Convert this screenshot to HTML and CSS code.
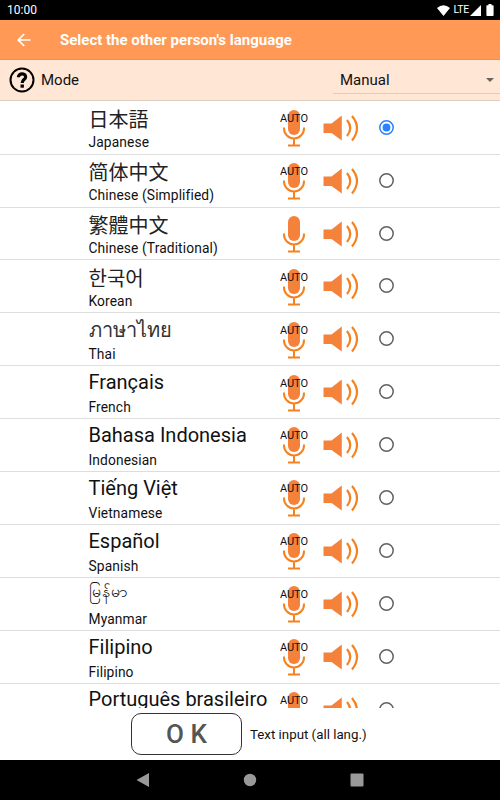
FILE: index.html
```html
<!DOCTYPE html>
<html lang="en">
<head>
<meta charset="utf-8">
<title>Select the other person's language</title>
<link rel="stylesheet" href="styles.css">
</head>
<body>
<svg class="defs" aria-hidden="true">
  <symbol id="mic" viewBox="0 0 30 40">
    <rect x="9" y="2" width="12" height="25" rx="6" fill="#f4823a"/>
    <path d="M5 19.500V20.500C5 26 9.500 30.500 15 30.500S25 26 25 20.500V19.500M15 30.500V37M9 37.500H21" fill="none" stroke="#f5821f" stroke-width="2"/>
  </symbol>
  <symbol id="speaker" viewBox="0 0 40 30">
    <path d="M2.500 10.500H10.500L20.800 2.500V27.500L10.500 20H2.500Z" fill="#f4823a"/>
    <path d="M26 7Q32.500 15 26 23M31 3Q41 15 31 27.500" fill="none" stroke="#f5821f" stroke-width="2.200"/>
  </symbol>
  <symbol id="radio" viewBox="0 0 15 15">
    <circle cx="7.500" cy="7.500" r="6.700" fill="none" stroke="currentColor" stroke-width="1.500"/>
  </symbol>
  <symbol id="radio-on" viewBox="0 0 15 15">
    <circle cx="7.500" cy="7.500" r="6.700" fill="none" stroke="currentColor" stroke-width="1.500"/>
    <circle cx="7.500" cy="7.500" r="3.900" fill="currentColor"/>
  </symbol>
</svg>
<div class="screen">
  <div class="status">
    <span class="time">10:00</span>
    <svg class="wifi" viewBox="0 0 13 11"><path d="M0 3Q6.500-2.500 13 3L6.500 11Z" fill="#fff"/></svg>
    <span class="lte">LTE</span>
    <svg class="signal" viewBox="0 0 11 11"><path d="M11 0V11H0Z" fill="#fff"/></svg>
    <svg class="battery" viewBox="0 0 8 12"><path d="M2.500 0H5.500V1.200H7Q7.600 1.200 7.600 2V11Q7.600 12 6.800 12H1.200Q.4 12 .4 11V2Q.4 1.200 1 1.200H2.500Z" fill="#fff"/></svg>
  </div>
  <header class="appbar">
    <svg class="back" viewBox="0 0 14 14"><path d="M13.500 7H1.500M7.200 1L1.200 7L7.200 13" fill="none" stroke="#fff" stroke-width="1.700"/></svg>
    <h1>Select the other person's language</h1>
  </header>
  <div class="mode">
    <svg class="help" viewBox="0 0 26 26"><circle cx="13" cy="13" r="11.500" fill="none" stroke="#000" stroke-width="2"/><path d="M9.400 10.200C9.400 5.600 16.600 5.800 16.600 9.900C16.600 12.700 13.200 12.500 13.200 16" fill="none" stroke="#000" stroke-width="3.200"/><rect x="11.500" y="17.500" width="3.400" height="3.200"/></svg>
    <span>Mode</span>
    <div class="select"><span>Manual</span><i class="caret"></i></div>
  </div>
  <main class="list">
    <div class="row"><div class="lang"><div class="name cjk" lang="ja">日本語</div><div class="sub">Japanese</div></div><div class="mic"><svg><use href="#mic"/></svg><b>AUTO</b></div><svg class="speaker"><use href="#speaker"/></svg><svg class="radio on"><use href="#radio-on"/></svg></div>
    <div class="row"><div class="lang"><div class="name cjk sc" lang="zh-Hans">简体中文</div><div class="sub">Chinese (Simplified)</div></div><div class="mic"><svg><use href="#mic"/></svg><b>AUTO</b></div><svg class="speaker"><use href="#speaker"/></svg><svg class="radio"><use href="#radio"/></svg></div>
    <div class="row"><div class="lang"><div class="name cjk tc" lang="zh-Hant">繁體中文</div><div class="sub">Chinese (Traditional)</div></div><div class="mic"><svg><use href="#mic"/></svg></div><svg class="speaker"><use href="#speaker"/></svg><svg class="radio"><use href="#radio"/></svg></div>
    <div class="row"><div class="lang"><div class="name cjk kr" lang="ko">한국어</div><div class="sub">Korean</div></div><div class="mic"><svg><use href="#mic"/></svg><b>AUTO</b></div><svg class="speaker"><use href="#speaker"/></svg><svg class="radio"><use href="#radio"/></svg></div>
    <div class="row"><div class="lang"><div class="name thai" lang="th">ภาษาไทย</div><div class="sub">Thai</div></div><div class="mic"><svg><use href="#mic"/></svg><b>AUTO</b></div><svg class="speaker"><use href="#speaker"/></svg><svg class="radio"><use href="#radio"/></svg></div>
    <div class="row"><div class="lang"><div class="name">Français</div><div class="sub">French</div></div><div class="mic"><svg><use href="#mic"/></svg><b>AUTO</b></div><svg class="speaker"><use href="#speaker"/></svg><svg class="radio"><use href="#radio"/></svg></div>
    <div class="row"><div class="lang"><div class="name">Bahasa Indonesia</div><div class="sub">Indonesian</div></div><div class="mic"><svg><use href="#mic"/></svg><b>AUTO</b></div><svg class="speaker"><use href="#speaker"/></svg><svg class="radio"><use href="#radio"/></svg></div>
    <div class="row"><div class="lang"><div class="name" lang="vi">Tiếng Việt</div><div class="sub">Vietnamese</div></div><div class="mic"><svg><use href="#mic"/></svg><b>AUTO</b></div><svg class="speaker"><use href="#speaker"/></svg><svg class="radio"><use href="#radio"/></svg></div>
    <div class="row"><div class="lang"><div class="name">Español</div><div class="sub">Spanish</div></div><div class="mic"><svg><use href="#mic"/></svg><b>AUTO</b></div><svg class="speaker"><use href="#speaker"/></svg><svg class="radio"><use href="#radio"/></svg></div>
    <div class="row"><div class="lang"><div class="name myanmar" lang="my">မြန်မာ</div><div class="sub">Myanmar</div></div><div class="mic"><svg><use href="#mic"/></svg><b>AUTO</b></div><svg class="speaker"><use href="#speaker"/></svg><svg class="radio"><use href="#radio"/></svg></div>
    <div class="row"><div class="lang"><div class="name">Filipino</div><div class="sub">Filipino</div></div><div class="mic"><svg><use href="#mic"/></svg><b>AUTO</b></div><svg class="speaker"><use href="#speaker"/></svg><svg class="radio"><use href="#radio"/></svg></div>
    <div class="row"><div class="lang"><div class="name">Português brasileiro</div></div><div class="mic"><svg><use href="#mic"/></svg><b>AUTO</b></div><svg class="speaker"><use href="#speaker"/></svg><svg class="radio"><use href="#radio"/></svg></div>
  </main>
  <footer class="actions">
    <button class="ok">O K</button>
    <span>Text input (all lang.)</span>
  </footer>
  <nav class="navbar">
    <svg viewBox="0 0 14 14"><path d="M13 0V14L.5 7Z" fill="#999"/></svg>
    <svg viewBox="0 0 14 14"><circle cx="7" cy="7" r="6.200" fill="#999"/></svg>
    <svg viewBox="0 0 14 14"><rect x=".5" y=".5" width="13" height="13" rx="1" fill="#999"/></svg>
  </nav>
</div>
</body>
</html>
```
FILE: styles.css
```css
* { box-sizing: border-box; }
body { margin: 0; font-family: Roboto, "Noto Sans", sans-serif; color: #111; background: #fff; }
.defs { display: none; }
svg { display: block; }
.screen { width: 500px; height: 800px; display: flex; flex-direction: column; overflow: hidden; }
.status { height: 20px; flex: none; background: #000; color: #fff; display: flex; align-items: center; padding: 0 6px 0 7px; font-size: 12px; }
.time { margin-right: auto; }
.wifi { width: 13px; height: 11px; margin-right: 3px; }
.lte { font-size: 10.500px; line-height: 20px; letter-spacing: -0.3px; margin-right: 1px; }
.signal { width: 11px; height: 11px; margin-right: 5px; }
.battery { width: 8px; height: 12px; }
.appbar { height: 40px; flex: none; background: #ff9955; color: #fff; display: flex; align-items: center; padding-left: 17px; border-bottom: 1px solid #f98d40; }
.back { width: 14px; height: 14px; margin-right: 29px; }
h1 { margin: 0; font-size: 15px; font-weight: 700; line-height: 20px; }
.mode { height: 41px; flex: none; background: #ffe6d5; display: flex; align-items: center; padding-left: 9px; border-bottom: 1px solid #dfcdc2; font-size: 15px; }
.help { width: 26px; height: 26px; margin-right: 6px; }
.select { width: 167px; height: 28px; margin: 0 0 0 auto; padding: 0 6px 0 7px; display: flex; align-items: center; justify-content: space-between; border-bottom: 1px solid #dfcdc2; }
.caret { border: 4px solid transparent; border-top-color: #666; border-bottom: 0; }
.list { height: 607px; flex: none; overflow: hidden; padding-top: 0.700px; }
.row { height: 52.92px; display: flex; align-items: flex-start; padding-left: 88.500px; border-bottom: 1px solid #ddd; }
.lang { width: 190.500px; white-space: nowrap; padding-top: 2.800px; }
.name { height: 26px; line-height: 26px; font-size: 20px; }
.sub { height: 24px; line-height: 24px; font-size: 13.800px; letter-spacing: 0.1px; }
.cjk { font-family: "Noto Sans CJK JP", sans-serif; line-height: 29px; color: #222; }
.sc { font-family: "Noto Sans CJK SC", sans-serif; }
.tc { font-family: "Noto Sans CJK TC", sans-serif; }
.kr { font-family: "Noto Sans CJK KR", sans-serif; }
.thai { line-height: 28px; color: #333; }
.myanmar { font-size: 16px; line-height: 22px; }
.mic { position: relative; width: 30px; height: 40px; margin-top: 6.300px; }
.mic svg { width: 30px; height: 40px; }
.mic b { position: absolute; left: 0; top: 4px; width: 30px; text-align: center; font-size: 11px; line-height: 14px; font-weight: 400; }
.speaker { width: 40px; height: 30px; margin: 11px 0 0 12px; }
.radio { width: 15px; height: 15px; margin: 18px 0 0 18px; color: #606060; }
.radio.on { color: #2a80ff; }
.actions { height: 52px; flex: none; display: flex; align-items: flex-start; padding: 5px 0 0 131px; font-size: 13.300px; }
.ok { width: 111px; height: 42px; padding: 0; border: 1px solid #333; border-radius: 10px; background: #fff; color: #555; font: 500 26px Roboto, sans-serif; margin-right: 8px; }
.actions span { line-height: 43px; }
.navbar { height: 40px; flex: none; background: #000; display: flex; align-items: center; gap: 93px; padding-left: 136px; }
.navbar svg { width: 14px; height: 14px; }
```
